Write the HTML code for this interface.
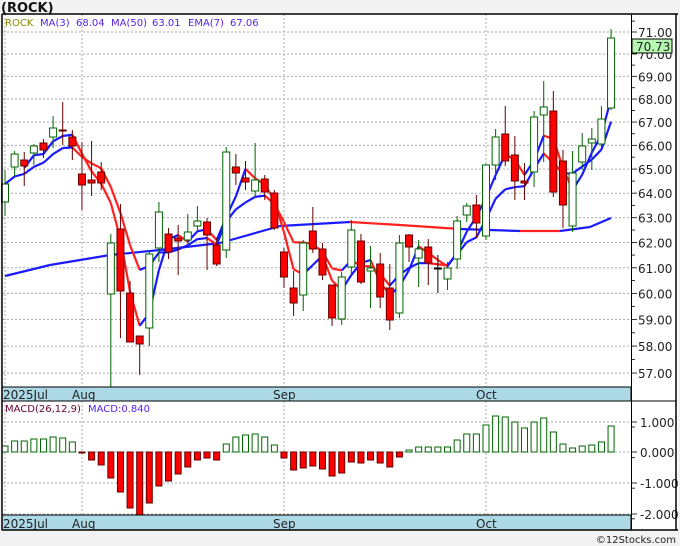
<!DOCTYPE html>
<html><head><meta charset="utf-8"><style>
html,body{margin:0;padding:0;background:#f2f2f2;}
svg{display:block;font-family:"DejaVu Sans","Liberation Sans",sans-serif;}
</style></head><body>
<svg id="s" width="680" height="546" viewBox="0 0 680 546" xmlns="http://www.w3.org/2000/svg">
<rect x="0" y="0" width="680" height="546" fill="#f2f2f2"/>
<text x="1" y="12" font-size="13" font-weight="bold" fill="#111">(ROCK)</text>
<rect x="2" y="14" width="676" height="516" fill="#fff"/>
<g id="g"></g>
<g font-size="10" fill="#5522ee">
<text x="5" y="26" fill="#8a8a00">ROCK</text>
<text x="40" y="26">MA(3)</text><text x="76" y="26">68.04</text>
<text x="111" y="26">MA(50)</text><text x="152" y="26">63.01</text>
<text x="188" y="26">EMA(7)</text><text x="230" y="26">67.06</text>
</g>
<text x="5" y="412" font-size="10" fill="#660033">MACD(26,12,9)</text>
<text x="88" y="412" font-size="10" fill="#5522ee">MACD:0.840</text>
<text x="676" y="543" font-size="10" fill="#222" text-anchor="end">©12Stocks.com</text>
</svg>
<script>
var g=document.getElementById('g'),h='';
function L(x1,y1,x2,y2,c,w,d){h+='<line x1="'+x1+'" y1="'+y1+'" x2="'+x2+'" y2="'+y2+'" stroke="'+c+'" stroke-width="'+(w||1)+'"'+(d?' stroke-dasharray="'+d+'"':'')+'/>';}
function T(x,y,t,c,a){h+='<text x="'+x+'" y="'+y+'" font-size="12" fill="'+(c||'#222')+'"'+(a?' text-anchor="'+a+'"':'')+'>'+t+'</text>';}
function PY(p){return 32+(Math.log(71)-Math.log(p))*1553;}
for(var p=57;p<=71;p++){var y=PY(p);L(3,y,631,y,'#aaa',1,'2,2');L(631,y,637,y,'#333');T(638,y+5,p+'.00','#222');}
for(var p=56.5;p<=71.5;p++){var y=PY(p);if(y>16&&y<386)L(631,y,635,y,'#333');}
[5,82,284,486].forEach(function(x){L(x,14,x,387,'#aaa',1,'2,2');L(x,401,x,515,'#aaa',1,'2,2');});
[[1,422],[0,452],[-1,483],[-2,514]].forEach(function(v){L(3,v[1],631,v[1],'#aaa',1,'2,2');L(631,v[1],637,v[1],'#333');T(640,v[1]+5,v[0].toFixed(3),'#222');});
for(var k=0;k<4;k++){L(631,412+k*30.6+15,635,412+k*30.6+15,'#333');}
var C=[[202,170,216,184],[167,151,176,154],[160,152,186,166],[153,144,165,146],[143,139,158,150],[137,116,148,128],[130,102,145,130],[137,130,160,146],[174,142,210,185],[180,141,196,183],[172,162,190,183],[294,234,387,243],[229,204,338,291],[293,281,340,342],[336,336,375,344],[328,250,346,254],[248,202,262,212],[234,228,259,252],[238,225,275,241],[240,214,245,232],[226,206,232,221],[222,218,270,235],[245,238,266,264],[250,147,258,152],[167,154,185,173],[178,161,190,182],[191,143,197,180],[179,175,200,192],[193,190,230,228],[252,248,288,277],[288,271,316,303],[295,240,311,243],[231,207,253,249],[249,243,280,275],[285,285,326,318],[319,272,325,277],[267,220,276,230],[241,234,284,282],[271,246,308,268],[264,253,308,297],[288,264,330,320],[313,235,318,243],[235,234,262,247],[258,240,287,249],[247,239,285,263],[268,255,293,268],[279,262,290,268],[259,216,269,221],[215,203,222,206],[205,195,238,223],[236,164,240,165],[165,129,180,137],[134,106,166,161],[155,136,200,181],[181,163,200,183],[172,111,187,117],[115,81,162,107],[111,91,197,192],[161,150,228,205],[226,151,232,173],[162,133,170,146],[143,128,170,139],[144,106,150,119],[108,29,110,38]];
var X=function(i){return 5+i*9.62;};
var M=[[5,276,0],[50,265,0],[110,255,0],[160,250,0],[220,243,0],[280,226,0],[350,222,0],[400,225,1],[460,229,1],[520,231,0],[560,231,1],[590,227,0],[611,218,0]];
for(var i=1;i<M.length;i++)L(M[i-1][0],M[i-1][1],M[i][0],M[i][1],M[i][2]?'#ff2020':'#1a1aff',2.2);
var cl=C.map(function(c){return c[3];}),e=[cl[0]],m=[];
for(var i=1;i<cl.length;i++)e.push(e[i-1]+(cl[i]-e[i-1])*0.25);
for(var i=0;i<cl.length;i++)m.push(i<2?null:(cl[i]+cl[i-1]+cl[i-2])/3);
function line(a){for(var i=1;i<a.length;i++){if(a[i-1]==null)continue;L(X(i-1),a[i-1],X(i),a[i],a[i]<=a[i-1]?'#1a1aff':'#ff2020',2.2);}}
line(e);line(m);
C.forEach(function(c,i){var x=X(i),up=c[3]<c[0],col=up?'#006400':'#660000';
 if(i==45)col='#000';
 L(x,c[1],x,c[2],col,1);
 var t=Math.min(c[0],c[3]),b=Math.max(c[0],c[3]);if(b-t<1)b=t+1;
 h+='<rect x="'+(x-3.5)+'" y="'+t+'" width="7" height="'+(b-t)+'" fill="'+(up?'#fff':'#ff0000')+'" stroke="'+col+'" stroke-width="1"/>';});
h+='<rect x="632" y="39" width="40" height="14" fill="#b5f7b0" stroke="#000"/>';T(636,51,'70.73','#222');
var D=[446,441,441,439,439,437,438,442,453,460,465,478,492,508,515,503,486,481,474,467,460,458,460,444,437,435,434,437,445,458,470,468,466,469,476,473,462,463,460,463,467,457,450,447,447,447,447,440,434,434,425,416,417,422,428,422,418,432,444,448,446,445,442,426];
D.forEach(function(v,i){var x=X(i);if(v<452)h+='<rect x="'+(x-3)+'" y="'+v+'" width="6" height="'+(452-v)+'" fill="#fff" stroke="#006400"/>';else h+='<rect x="'+(x-3)+'" y="452" width="6" height="'+Math.max(1,v-452)+'" fill="#ff0000" stroke="#660000"/>';});
[[387,401],[515,530]].forEach(function(b){h+='<rect x="2" y="'+b[0]+'" width="629" height="'+(b[1]-b[0])+'" fill="#add8e6" stroke="#000"/>';
 T(3,b[1]-2,'2025Jul');T(72,b[1]-2,'Aug');T(273,b[1]-2,'Sep');T(476,b[1]-2,'Oct');});
L(2,14,678,14,'#000',1.5);L(2,14,2,530,'#000',1.5);L(631.5,14,631.5,530,'#000',1);L(676,14,676,530,'#000',1.5);L(2,530,678,530,'#000',1.5);L(631,401,676,401,'#000',1);
g.innerHTML=h;
</script>
</body></html>
